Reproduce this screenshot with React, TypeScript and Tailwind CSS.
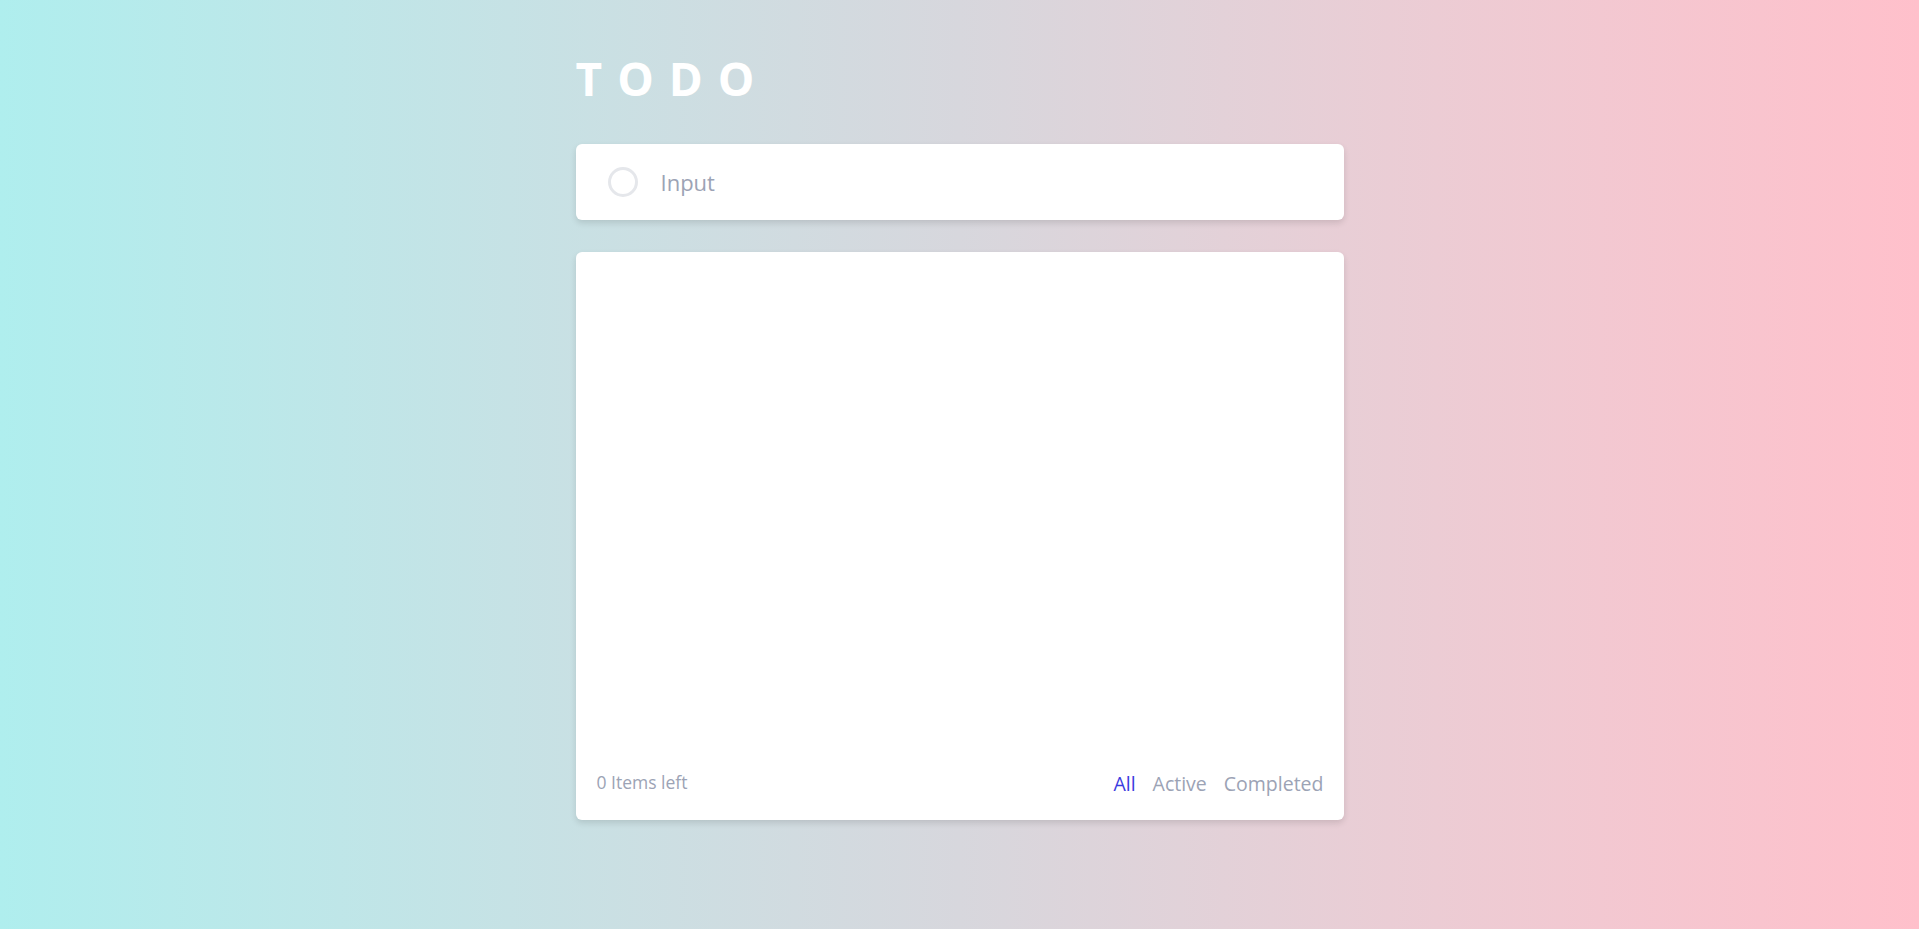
import React from "react";

export default function App() {
  return (
    <div
      className="min-h-screen w-full bg-gradient-to-r from-[#afeeee] via-[#d7d7dd] to-[#ffc0cb]"
      style={{ fontFamily: '"Open Sans", "Liberation Sans", sans-serif' }}
    >
      <div className="mx-auto w-[768px] pt-[50px]">
        <h1 className="text-[46px] font-bold leading-[56px] tracking-[15px] text-white">TODO</h1>
        <div className="mt-[38px] flex h-[76px] items-center rounded-[6px] bg-white pl-[32px] shadow-[0_3px_6px_rgba(0,0,0,0.12)]">
          <div className="h-[30px] w-[30px] rounded-full border-[3px] border-[#e5e7eb]" />
          <input
            placeholder="Input"
            className="ml-[23px] flex-1 bg-transparent text-[22px] text-[#334155] outline-none placeholder:text-[#9ca3b5]"
          />
        </div>
        <div className="mt-[32px] flex h-[568px] flex-col rounded-[6px] bg-white shadow-[0_3px_6px_rgba(0,0,0,0.12)]">
          <div className="flex-1" />
          <div className="flex items-end justify-between pb-[22px] pl-[21px] pr-[20px]">
            <span className="mb-[3px] text-[17.5px] text-[#9ca3b5]">0 Items left</span>
            <div className="flex gap-[17px] text-[19.5px] text-[#9ca3b5]">
              <button className="text-[#3b3be0]">All</button>
              <button>Active</button>
              <button>Completed</button>
            </div>
          </div>
        </div>
      </div>
    </div>
  );
}
